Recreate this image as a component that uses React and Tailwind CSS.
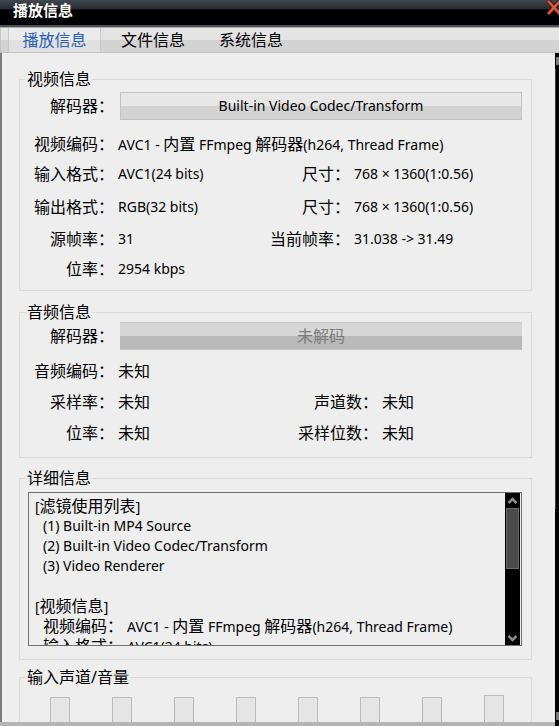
import React from "react";

const CJK = /([\u3000-\u303f\u3400-\u9fff\uff00-\uffef]+)/;

// CJK glyphs in the reference are a touch larger than the latin ones
const Mixed = ({ text }) =>
  text.split(CJK).map((s, i) =>
    i % 2 ? (
      <span key={i} className="text-[16px]">
        {s}
      </span>
    ) : (
      s
    )
  );

const Row = ({ label, value, label2, value2, colW = "w-[150px]", className = "" }) => (
  <div className={`flex h-[30px] items-center leading-[20px] ${className}`}>
    <div className="w-[94px] shrink-0 text-right text-[16px]">{label}</div>
    <div className={`${colW} shrink-0 whitespace-nowrap pl-[4px]`}>
      <Mixed text={value} />
    </div>
    {label2 && (
      <>
        <div className="w-[86px] shrink-0 text-right text-[16px]">{label2}</div>
        <div className="whitespace-nowrap pl-[4px]">
          <Mixed text={value2} />
        </div>
      </>
    )}
  </div>
);

const Group = ({ title, className = "", children }) => (
  <fieldset className={`ml-[17px] w-[513px] border border-[#d9d9d9] ${className}`}>
    <legend className="ml-[6px] px-px text-[16px] leading-[20px]">{title}</legend>
    {children}
  </fieldset>
);

const detailLines = [
  { t: "[滤镜使用列表]" },
  { t: "(1) Built-in MP4 Source", indent: true },
  { t: "(2) Built-in Video Codec/Transform", indent: true },
  { t: "(3) Video Renderer", indent: true },
  { t: "" },
  { t: "[视频信息]" },
  { k: "视频编码：", t: "AVC1 - 内置 FFmpeg 解码器(h264, Thread Frame)", indent: true },
  { k: "输入格式：", t: "AVC1(24 bits)", indent: true },
];

const App = () => {
  return (
    <div className="flex h-[726px] w-[559px] flex-col overflow-hidden bg-[#eeeeee] font-[family-name:'Noto_Sans','Noto_Sans_CJK_SC',sans-serif] text-[14px] text-black">
      {/* title bar */}
      <div className="flex h-[25px] shrink-0 items-start justify-between bg-[linear-gradient(#41464f_0%,#2a2d34_34%,#000_40%,#000_100%)]">
        <span className="pl-[13px] pt-[1px] text-[15px] font-bold leading-[18px] text-white">播放信息</span>
        <svg width="16" height="16" viewBox="0 0 16 16" className="mr-[-2px]">
          <path d="M3 1 L15 14 M15 1 L3 14" stroke="#3a1a14" strokeWidth="4.5" />
          <path d="M3 1 L15 14 M15 1 L3 14" stroke="#e0583f" strokeWidth="2.5" />
        </svg>
      </div>
      <div className="h-[2px] shrink-0 bg-[#4e5058]" />
      <div className="h-px shrink-0 bg-[#a6a6a6]" />

      {/* tabs */}
      <div className="flex h-[25px] shrink-0 border-b border-[#c2c2c2] bg-[linear-gradient(#e4e4e4_0%,#e4e4e4_48%,#d3d3d3_48%,#d3d3d3_100%)] text-[16px] leading-[20px]">
        <div className="w-[8px] border-l border-[#c4c4c4]" />
        <div className="flex w-[93px] items-center justify-center border-x border-[#c8c8c8] bg-[linear-gradient(#ebebeb_0%,#ebebeb_48%,#e0e0e0_48%,#e0e0e0_100%)] text-[#2b5fb3]">
          播放信息
        </div>
        <div className="ml-[3px] flex items-center px-[17px]">文件信息</div>
        <div className="flex items-center px-[17px]">系统信息</div>
      </div>

      <div className="flex min-h-0 flex-1">
        <div className="flex min-w-0 flex-1 flex-col">
          <div className="min-h-0 flex-1 overflow-hidden border-l-2 border-[#7d7d7d]">
            {/* video */}
            <Group title="视频信息" className="mt-[16px] pb-[6px]">
              <div className="mt-[3px] flex h-[28px] items-center">
                <div className="w-[94px] shrink-0 text-right text-[16px]">解码器：</div>
                <button className="ml-[6px] h-[28px] w-[402px] border border-[#c2c2c2] bg-[linear-gradient(#e7e7e7_0%,#e7e7e7_50%,#d3d3d3_50%,#d3d3d3_100%)] text-[14px] leading-[20px]">
                  Built-in Video Codec/Transform
                </button>
              </div>
              <Row className="mt-[9px]" label="视频编码：" value="AVC1 - 内置 FFmpeg 解码器(h264, Thread Frame)" />
              <Row label="输入格式：" value="AVC1(24 bits)" label2="尺寸：" value2="768 × 1360(1:0.56)" />
              <Row className="mt-[3px]" label="输出格式：" value="RGB(32 bits)" label2="尺寸：" value2="768 × 1360(1:0.56)" />
              <Row className="mt-[2px]" label="源帧率：" value="31" label2="当前帧率：" value2="31.038 -> 31.49" />
              <Row label="位率：" value="2954 kbps" />
            </Group>

            {/* audio */}
            <Group title="音频信息" className="mt-[11px] pb-[9px]">
              <div className="flex h-[28px] items-center">
                <div className="w-[94px] shrink-0 text-right text-[16px]">解码器：</div>
                <button className="ml-[6px] h-[28px] w-[402px] border-y border-[#c6c6c6] bg-[linear-gradient(#d6d6d6_0%,#d6d6d6_50%,#b9b9b9_50%,#b9b9b9_100%)] text-[16px] leading-[20px] text-[#7c7c7c]">
                  未解码
                </button>
              </div>
              <Row className="mt-[6px]" colW="w-[178px]" label="音频编码：" value="未知" />
              <Row className="mt-px" colW="w-[178px]" label="采样率：" value="未知" label2="声道数：" value2="未知" />
              <Row className="mt-px" colW="w-[178px]" label="位率：" value="未知" label2="采样位数：" value2="未知" />
            </Group>

            {/* details */}
            <Group title="详细信息" className="mt-[10px] pb-[13px]">
              <div className="ml-[8px] mt-[4px] flex h-[154px] w-[494px] border border-[#6e6e6e]">
                <div className="min-w-0 flex-1 overflow-hidden pl-[6px] pt-[3px] leading-[20px]">
                  {detailLines.map((l, i) => (
                    <div key={i} className={`h-[20px] whitespace-nowrap ${l.indent ? "pl-[8px]" : ""}`}>
                      {l.k && <span className="mr-[4px] text-[16px]">{l.k}</span>}
                      <Mixed text={l.t} />
                    </div>
                  ))}
                </div>
                <div className="mr-px flex w-[15px] shrink-0 flex-col items-center bg-black">
                  <svg width="11" height="12" viewBox="0 0 11 12" className="mt-[2px] shrink-0">
                    <path d="M1.5 8 L5.5 4 L9.5 8" stroke="#8a8a8a" strokeWidth="2.5" fill="none" />
                  </svg>
                  <div className="mt-[1px] h-[61px] w-[13px] border border-[#6a6a6a] bg-[#4b4b4b]" />
                  <div className="flex-1" />
                  <svg width="11" height="12" viewBox="0 0 11 12" className="mb-[1px] shrink-0">
                    <path d="M1.5 4 L5.5 8 L9.5 4" stroke="#8a8a8a" strokeWidth="2.5" fill="none" />
                  </svg>
                </div>
              </div>
            </Group>

            {/* volume */}
            <Group title="输入声道/音量" className="mt-[7px] pb-[10px]">
              <div className="ml-[30px] mt-[8px] flex items-end gap-[42px]">
                {[0, 1, 2, 3, 4, 5, 6, 7].map((i) => (
                  <div
                    key={i}
                    className={`w-[20px] border border-[#bababa] bg-[#e5e5e5] ${i === 7 ? "h-[40px]" : "h-[38px]"}`}
                  />
                ))}
              </div>
            </Group>
          </div>
          <div className="h-[4px] shrink-0 bg-[#b5b5b5]" />
        </div>

        {/* outer scrollbar, mostly cut off */}
        <div className="flex w-[4px] shrink-0 flex-col bg-black">
          <div className="mt-[4px] h-[8px] w-[3px] ml-px bg-[#7a7a7a]" />
          <div className="mt-[4px] h-[440px] border-l border-[#3c3c3c]" />
          <div className="flex-1" />
          <div className="mb-[6px] h-[8px] w-[3px] ml-px bg-[#7a7a7a]" />
        </div>
      </div>
    </div>
  );
};

export default App;
